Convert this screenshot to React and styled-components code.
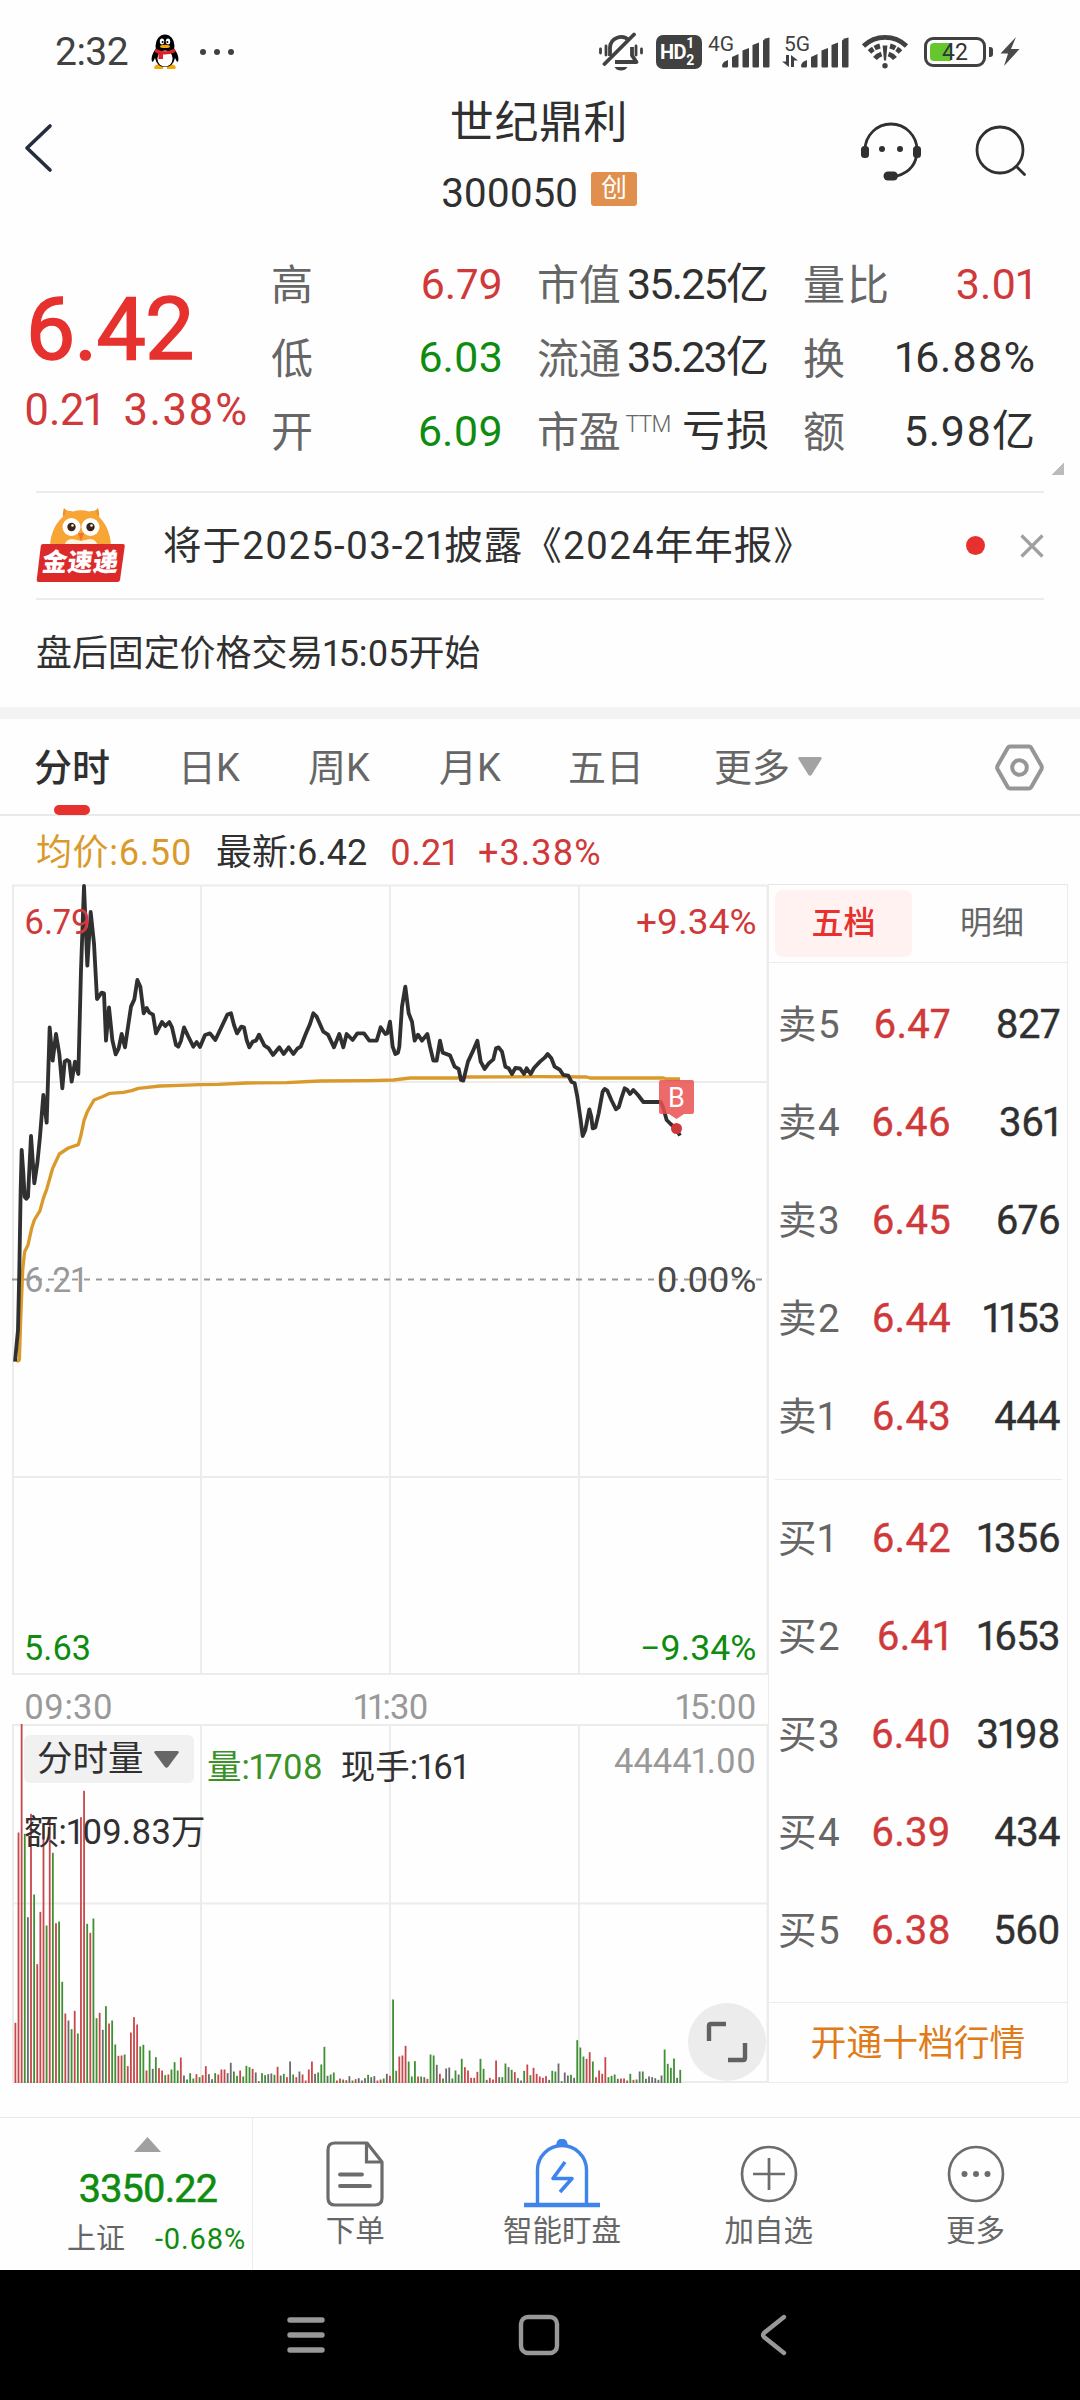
import React from 'react';
import styled, { createGlobalStyle } from 'styled-components';

const COLORS = {
	ink: '#303030',
	gray: '#666',
	light: '#999',
	line: '#ececec',
	red: '#d0393a',
	brightRed: '#e6312f',
	green: '#0f8c10',
	gold: '#d99a2b',
	orange: '#e07b1a',
	blue: '#3f83ec',
};

const STATS = [
	[
		{ label: '高', value: '6.79', color: COLORS.red },
		{ label: '低', value: '6.03', color: COLORS.green },
		{ label: '开', value: '6.09', color: COLORS.green },
	],
	[
		{ label: '市值', value: '35.25亿', spacing: -1.8 },
		{ label: '流通', value: '35.23亿', spacing: -1.8 },
		{ label: '市盈', sup: 'TTM', value: '亏损', spacing: 1 },
	],
	[
		{ label: '量比', value: '3.01', color: COLORS.red, labelSpacing: 2 },
		{ label: '换', value: '16.88%', spacing: 0.7 },
		{ label: '额', value: '5.98亿', spacing: 0.8 },
	],
];

const SELLS = [
	['卖5', '6.47', '827'],
	['卖4', '6.46', '361'],
	['卖3', '6.45', '676'],
	['卖2', '6.44', '1153'],
	['卖1', '6.43', '444'],
];

const BUYS = [
	['买1', '6.42', '1356'],
	['买2', '6.41', '1653'],
	['买3', '6.40', '3198'],
	['买4', '6.39', '434'],
	['买5', '6.38', '560'],
];

// chart data is kept at 3x, the svg scales it down
const PRICE_LINE =
	'45,1475 54,1380 58,1200 62,960 65,840 70,910 74,980 79,986 84,980 93,798 98,870 103,940 112,880 120,800 130,675 140,758 149,472 158,572 168,492 178,552 187,655 194,575 201,570 208,575 215,635 225,575 235,612 243,300 252,48 262,287 272,126 282,220 291,387 305,368 312,370 318,512 327,412 337,510 347,553 356,535 365,492 375,532 384,470 393,410 403,388 412,330 421,350 431,430 440,414 448,428 459,434 468,490 486,456 496,468 508,456 516,472 528,525 535,530 543,512 552,472 565,500 580,530 590,516 600,531 615,495 630,490 646,510 665,470 682,434 693,430 702,465 711,490 724,470 732,472 740,510 748,532 758,515 768,512 777,494 793,526 806,535 819,555 838,532 851,552 866,532 880,552 892,536 902,530 918,490 930,462 940,430 950,440 970,485 984,494 1002,532 1018,492 1030,532 1040,492 1058,510 1072,490 1092,490 1108,512 1130,512 1142,472 1156,492 1162,490 1170,455 1178,530 1186,552 1194,548 1198,530 1206,410 1216,350 1226,430 1236,455 1244,512 1254,494 1266,512 1282,492 1290,530 1300,572 1310,572 1320,512 1328,548 1350,556 1364,590 1376,597 1383,630 1390,632 1404,575 1418,545 1432,512 1442,575 1454,597 1466,580 1480,568 1488,535 1496,532 1506,545 1516,590 1526,595 1536,612 1546,594 1560,595 1572,612 1580,595 1592,612 1602,594 1620,575 1634,563 1643,552 1654,565 1664,590 1680,600 1690,615 1705,617 1714,635 1724,640 1732,680 1742,750 1748,798 1756,780 1768,718 1774,740 1778,775 1786,772 1796,730 1808,665 1814,657 1822,662 1834,690 1848,718 1856,712 1864,685 1874,655 1882,660 1890,672 1900,660 1914,675 1930,696 1982,696 1990,715 2000,750 2012,762 2028,776 2040,797';

const AVERAGE_LINE =
	'50,1475 58,1470 62,1350 68,1200 74,1145 84,1125 95,1075 103,1050 120,1022 130,985 140,958 158,895 178,852 205,834 235,824 243,795 252,752 262,725 282,690 305,681 330,670 370,667 395,662 415,655 480,648 540,646 600,644 655,643 740,639 860,638 960,633 1110,632 1180,630 1230,624 1370,624 1400,621 1620,620 1760,621 1770,624 1990,624 2002,627 2040,627';

// r = up, g = down, k = flat; the number is the top of the bar
const VOLUME = `
	r1267 r696 r369 g700 k950 r640 g882 r1091 r934 r672 g975 r655 g757 r968 g963 g1144 r1239 k1260 g1286 r1231
	g1299 r650 r571 g970 r997 g954 g1253 r1237 k1288 g1217 r1269 g1260 g1332 r1366 r1365 g1362 r1397 r1296 r1250 r1272
	g1338 g1333 r1410 g1350 k1405 g1370 r1403 r1410 g1424 r1422 g1407 g1385 g1410 r1371 k1425 g1437 g1418 g1434 r1421 g1430
	r1424 r1397 k1421 k1436 g1418 r1422 r1407 r1407 k1418 k1387 g1413 g1426 r1410 g1428 g1396 g1400 r1405 k1416 r1442 g1418
	g1424 k1421 k1419 g1423 r1399 k1425 g1420 r1430 k1383 g1422 r1430 k1413 r1422 r1440 r1407 r1383 k1420 g1416 g1392 g1339
	k1426 g1422 g1416 r1440 r1434 g1437 r1439 k1427 g1440 r1436 k1433 k1440 k1433 g1423 k1430 k1427 r1440 r1437 g1434 k1420
	r1426 g1197 g1411 r1368 r1365 r1336 g1383 g1428 g1382 r1428 g1428 k1430 r1435 g1362 g1365 k1393 r1420 g1434 k1404 k1401
	g1434 g1410 k1422 g1375 r1400 r1410 r1432 r1432 r1414 g1375 g1405 k1438 r1432 r1437 r1380 k1430 g1430 g1389 k1400 g1408
	r1415 k1433 k1440 g1411 r1392 g1424 r1402 r1420 r1428 r1432 r1427 k1438 g1411 g1413 k1389 g1442 k1416 k1425 g1423 k1432
	g1319 g1341 g1368 r1375 r1355 g1383 r1430 r1410 r1420 r1370 g1430 g1426 g1422 k1435 r1434 r1434 k1440 g1420 r1438 g1437
	k1413 g1413 k1435 k1428 k1430 k1433 k1438 k1425 g1347 g1390 g1402 g1374 k1432 g1408
`
	.trim()
	.split(/\s+/);

const VOLUME_COLORS = { r: '#c9474a', g: '#3f8f33', k: '#6a6a6a' };

const PenguinIcon = () => (
	<svg width='32' height='36' viewBox='0 0 32 36'>
		<path d='M7 31 L14 29 L14 35 H6 Q4 33 7 31 Z M25 31 L18 29 L18 35 H26 Q28 33 25 31 Z' fill='#f5a800' />
		<ellipse cx='16' cy='12' rx='9.5' ry='11.5' fill='#000' />
		<path d='M6.5 15 Q1 23 3 28 Q5 27 6 24 Q8 33 16 33 Q24 33 26 24 Q27 27 29 28 Q31 23 25.5 15 Z' fill='#000' />
		<ellipse cx='16' cy='24.5' rx='7.6' ry='8' fill='#fff' />
		<ellipse cx='13' cy='7.5' rx='2.2' ry='3' fill='#fff' />
		<ellipse cx='19' cy='7.5' rx='2.2' ry='3' fill='#fff' />
		<circle cx='13.6' cy='8' r='1' fill='#000' />
		<circle cx='18.4' cy='8' r='1' fill='#000' />
		<ellipse cx='16' cy='12.4' rx='5' ry='1.7' fill='#f5a800' />
		<path d='M6.5 14.5 Q16 20 25.5 14.5 L26.5 18 Q20 21 14 20.5 V25 H9.5 V19.7 L5.8 18 Z' fill='#e01f26' />
	</svg>
);

const MutedBellIcon = () => (
	<svg width='46' height='40' viewBox='0 0 46 40' fill='none' stroke='#414141'>
		<path d='M8 14v9M2.500 17v4M38 14v9M43.500 17v4' strokeWidth='2.800' strokeLinecap='round' />
		<path d='M12 24V15.500a11 11 0 0 1 19-7' strokeWidth='3.800' />
		<path d='M34 15v8.500l4.500 6.500H17' strokeWidth='3.800' strokeLinejoin='round' />
		<path d='M6.500 32L36 2.500' strokeWidth='3.800' strokeLinecap='round' />
		<path d='M16.500 35h13q-2 3.600-6.500 3.600t-6.500-3.600z' fill='#414141' stroke='none' />
	</svg>
);

const SignalBars = () => (
	<svg width='49' height='31' viewBox='0 0 49 31' fill='#414141'>
		<path d='M1 29q0-4 6-6v6q0 1.500-1.500 1.500H2.500Q1 30.500 1 29z' />
		<path d='M11 20l6.500-3v12.500a1 1 0 0 1-1 1h-4.500a1 1 0 0 1-1-1z' />
		<path d='M21.500 13.500l6.500-2.500v18.500a1 1 0 0 1-1 1h-4.500a1 1 0 0 1-1-1z' />
		<path d='M31.500 8l6.500-2.500v24a1 1 0 0 1-1 1H32.500a1 1 0 0 1-1-1z' />
		<path d='M42 3.500q2-2.500 6.500-3v29a1 1 0 0 1-1 1h-4.500a1 1 0 0 1-1-1z' />
	</svg>
);

const DataArrows = () => (
	<svg width='16' height='12' viewBox='0 0 16 12' fill='#414141'>
		<path d='M4 0h3v12L0 6.500h4zM9 12V0l7 5.500h-4V12z' />
	</svg>
);

const WifiIcon = () => (
	<svg width='48' height='34' viewBox='0 0 48 34' fill='none' stroke='#414141'>
		<path d='M2.500 11a31 31 0 0 1 43 0' strokeWidth='4.6' />
		<path d='M8.500 17a23 23 0 0 1 10.500-6M39.500 17a23 23 0 0 0-10.500-6' strokeWidth='5' strokeDasharray='5 1.500 8' />
		<path d='M14 23.500a14 14 0 0 1 6.500-4.500M34 23.500a14 14 0 0 0-6.500-4.500' strokeWidth='5' />
		<path d='M21.600 10.500h4.800l-1.400 15h-2z' fill='#414141' stroke='none' />
		<circle cx='24' cy='30.800' r='2.700' fill='#414141' stroke='none' />
	</svg>
);

const BoltIcon = () => (
	<svg width='20' height='29' viewBox='0 0 20 29'>
		<path d='M16 0L.5 16.500h7.500L4 29 19.500 12H11z' fill='#4a4a4a' />
	</svg>
);

const BackIcon = () => (
	<svg width='32' height='50' viewBox='0 0 32 50'>
		<path d='M28 3L5 25l23 22' fill='none' stroke='#232d3d' strokeWidth='3.6' strokeLinecap='round' strokeLinejoin='round' />
	</svg>
);

const HeadsetIcon = () => (
	<svg width='62' height='60' viewBox='0 0 62 60' fill='#303030'>
		<path d='M5 28a26 26 0 0 1 52 0q0 20-20 26' fill='none' stroke='#303030' strokeWidth='2.800' />
		<rect x='1' y='24' width='8' height='12' rx='3.500' />
		<rect x='53' y='24' width='8' height='12' rx='3.500' />
		<circle cx='22' cy='27' r='3' />
		<circle cx='40' cy='27' r='3' />
		<rect x='23.500' y='49.500' width='14.500' height='9' rx='4.500' />
	</svg>
);

const SearchIcon = () => (
	<svg width='54' height='54' viewBox='0 0 54 54' fill='none' stroke='#303030' strokeWidth='2.800'>
		<circle cx='27' cy='25' r='23' />
		<path d='M43.500 41.500l8 8' strokeLinecap='round' />
	</svg>
);

const OwlLogo = () => (
	<svg width='90' height='76' viewBox='0 0 90 76'>
		<path d='M28 0q-2 6-.5 10L37 3Q31 4 28 0zM62 0q2 6 .5 10L53 3Q59 4 62 0z' fill='#e8952f' />
		<path d='M14 38Q15 18 29 7l1-5q4 3 7 1.500 8-2.500 16 0Q57 5 60 2l1 5q13 11 14 31z' fill='#f7a535' />
		<path d='M28 38q2-7 8-7 6 1 9 2 3-1 9-2 6 0 8 7z' fill='#fff3e0' />
		<path d='M42 25h6l-3 8z' fill='#f0762a' />
		<circle cx='35.500' cy='19' r='9' fill='#fff' />
		<circle cx='54.500' cy='19' r='9' fill='#fff' />
		<circle cx='35.500' cy='19' r='4.200' fill='#3a2415' />
		<circle cx='54.500' cy='19' r='4.200' fill='#3a2415' />
		<circle cx='36.500' cy='17.500' r='1.300' fill='#fff' />
		<circle cx='55.500' cy='17.500' r='1.300' fill='#fff' />
		<path d='M7 36h80q2 0 1.800 2l-4.800 34q-.4 2-2.500 2H2.500q-2 0-1.800-2L4.800 38q.2-2 2.200-2z' fill='#dc2a2a' />
		<text
			x='7'
			y='63'
			textLength='76'
			fontSize='25'
			fontWeight='900'
			fontFamily='"Noto Sans CJK SC", sans-serif'
			fill='#fff'
			transform='skewX(-7) translate(6 0)'
		>
			金速递
		</text>
	</svg>
);

const CloseIcon = () => (
	<svg width='24' height='24' viewBox='0 0 24 24'>
		<path d='M1.500 1.500l21 21M22.500 1.500l-21 21' stroke='#a0a0a0' strokeWidth='3.200' />
	</svg>
);

const HexIcon = () => (
	<svg width='49' height='47' viewBox='0 0 49 47' fill='none' stroke='#969696' strokeWidth='4'>
		<path
			d='M15 2.500h19q1.500 0 2.300 1.400l10 17.600q1 2 0 4l-10 17.600q-.8 1.400-2.300 1.400H15q-1.500 0-2.300-1.400l-10-17.600q-1-2 0-4l10-17.600Q13.500 2.500 15 2.500z'
			strokeLinejoin='round'
		/>
		<circle cx='24.500' cy='23.500' r='7.300' />
	</svg>
);

const Triangle = ({ width, height, color, up }) => (
	<svg width={width} height={height} viewBox='0 0 24 18' preserveAspectRatio='none'>
		<path d={up ? 'M12 0L24 18H0z' : 'M1.500 0h21q2 .5 1 2L13.500 17q-1.500 1.500-3 0L.5 2q-1-1.500 1-2z'} fill={color} />
	</svg>
);

const ExpandIcon = () => (
	<svg width='42' height='42' viewBox='0 0 42 42' fill='none' stroke='#616161' strokeWidth='4.400'>
		<path d='M3 20V5q0-2 2-2h15M39 22v15q0 2-2 2H22' />
	</svg>
);

const OrderIcon = () => (
	<svg width='58' height='66' viewBox='0 0 58 66' fill='none' stroke='#6c6c6c' strokeWidth='3.200'>
		<path d='M9 2h32l15 19v36q0 7-7 7H9q-7 0-7-7V9q0-7 7-7z' strokeLinejoin='round' />
		<path d='M40.500 3v18H56' />
		<path d='M14 33.500h22M14 45h30' strokeWidth='3.800' strokeLinecap='round' />
	</svg>
);

const WatchIcon = () => (
	<svg width='76' height='70' viewBox='0 0 76 70' fill='none' stroke={COLORS.blue} strokeWidth='3.400'>
		<path d='M13.500 65V31a24.500 24.500 0 0 1 49 0v34' />
		<path d='M34 6q0-4 4-5 4 1 4 5z' fill={COLORS.blue} />
		<path d='M0 66h76' strokeWidth='4.400' />
		<path d='M41 23L29 39.500h19L36 53' strokeWidth='3.600' strokeLinejoin='round' />
	</svg>
);

const AddIcon = () => (
	<svg width='58' height='58' viewBox='0 0 58 58' fill='none' stroke='#6c6c6c' strokeWidth='2.700'>
		<circle cx='29' cy='29' r='27' />
		<path d='M13 29h32M29 13v32' />
	</svg>
);

const MoreIcon = () => (
	<svg width='58' height='58' viewBox='0 0 58 58' fill='#6c6c6c'>
		<circle cx='29' cy='29' r='27' fill='none' stroke='#6c6c6c' strokeWidth='2.700' />
		<circle cx='17.500' cy='29' r='3' />
		<circle cx='29' cy='29' r='3' />
		<circle cx='40.500' cy='29' r='3' />
	</svg>
);

const ChartLabel = ({ x, y, width, color, children }) => (
	<text x={x} y={y} textLength={width} lengthAdjust='spacingAndGlyphs' fontSize='34.5' fill={color}>
		{children}
	</text>
);

const PriceChart = () => (
	<ChartSvg width='768' height='791' viewBox='0 0 768 791'>
		<g stroke={COLORS.line} strokeWidth='2'>
			<path d='M12 1.500H768M12 198H768M12 593H768M12 790H768' />
			<path d='M13 1V791M201 1V791M390 1V791M579 1V791M767.500 1V791' />
		</g>
		<path d='M12 395.500H764' stroke='#9a9a9a' strokeWidth='1.800' strokeDasharray='6 6' />
		<g transform='translate(0 -14) scale(0.33333)' fill='none' strokeLinejoin='round'>
			<polyline points={AVERAGE_LINE} stroke={COLORS.gold} strokeWidth='10' />
			<polyline points={PRICE_LINE} stroke='#303030' strokeWidth='11.500' />
		</g>
		<ChartLabel x='24' y='49.500' width='67' color={COLORS.red}>6.79</ChartLabel>
		<ChartLabel x='24' y='407.500' width='62' color={COLORS.light}>6.21</ChartLabel>
		<ChartLabel x='24' y='776' width='67' color={COLORS.green}>5.63</ChartLabel>
		<ChartLabel x='636' y='49.500' width='120.500' color={COLORS.red}>+9.34%</ChartLabel>
		<ChartLabel x='656.500' y='407.500' width='100' color='#4a4a4a'>0.00%</ChartLabel>
		<ChartLabel x='640' y='776' width='116.500' color={COLORS.green}>−9.34%</ChartLabel>
		<circle cx='676.500' cy='244.500' r='5.500' fill={COLORS.red} />
		<path d='M661 196h31q2 0 2 2v30q0 2-2 2h-8l-7.500 5-7.500-5h-8q-2 0-2-2v-30q0-2 2-2z' fill='#e95050' fillOpacity='.85' />
		<text x='676.500' y='223' fontSize='27' textAnchor='middle' fill='#fff'>
			B
		</text>
	</ChartSvg>
);

const VolumeChart = () => (
	<ChartSvg width='768' height='359' viewBox='0 0 768 359'>
		<g stroke={COLORS.line} strokeWidth='2'>
			<path d='M12 1H768M12 179.500H768M12 358H768' />
			<path d='M13 0V359M201 0V359M390 0V359M579 0V359M767.500 0V359' />
		</g>
		<g transform='translate(0 -123.500) scale(0.33333)'>
			{VOLUME.map((bar, i) => (
				<rect
					key={i}
					x={43.500 + i * 9.364}
					y={bar.slice(1)}
					width='5.400'
					height={1448 - bar.slice(1)}
					fill={VOLUME_COLORS[bar[0]]}
				/>
			))}
		</g>
		<ChartLabel x='614' y='49' width='142' color={COLORS.light}>44441.00</ChartLabel>
	</ChartSvg>
);

const Stat = ({ label, sup, value, color, spacing, labelSpacing }) => (
	<StatRow>
		<StatLabel $spacing={labelSpacing}>
			{label}
			{sup && <Sup>{sup}</Sup>}
		</StatLabel>
		<StatValue $color={color} $spacing={spacing}>
			{value}
		</StatValue>
	</StatRow>
);

const OrderRow = ({ row: [label, price, amount] }) => (
	<OrderLine>
		<OrderLabel>{label}</OrderLabel>
		<OrderPrice>{price}</OrderPrice>
		<OrderAmount>{amount}</OrderAmount>
	</OrderLine>
);

const App = () => {
	return (
		<Page>
			<GlobalStyle />
			<StatusBar>
				<Clock>2:32</Clock>
				<PenguinIcon />
				<StatusDots>
					<i />
					<i />
					<i />
				</StatusDots>
				<StatusFiller />
				<MutedBellIcon />
				<HdBadge>
					HD
					<HdNumbers>
						<span>1</span>
						<span>2</span>
					</HdNumbers>
				</HdBadge>
				<Signal>
					<Network>
						<span>4G</span>
					</Network>
					<SignalBars />
				</Signal>
				<Signal $wide>
					<Network>
						<span>5G</span>
						<DataArrows />
					</Network>
					<SignalBars />
				</Signal>
				<WifiIcon />
				<Battery>
					<BatteryLevel />
					<BatteryText>42</BatteryText>
				</Battery>
				<BatteryNub />
				<BoltIcon />
			</StatusBar>

			<Header>
				<BackIcon />
				<Heading>
					<Title>世纪鼎利</Title>
					<Code>
						300050
						<Board>创</Board>
					</Code>
				</Heading>
				<HeaderActions>
					<HeadsetIcon />
					<SearchIcon />
				</HeaderActions>
			</Header>

			<Quote>
				<PriceBlock>
					<Price>6.42</Price>
					<Change>
						<span>0.21</span>
						<ChangePercent>3.38%</ChangePercent>
					</Change>
				</PriceBlock>
				{STATS.map((column, i) => (
					<div key={i}>
						{column.map((stat) => (
							<Stat key={stat.label} {...stat} />
						))}
					</div>
				))}
				<Corner />
			</Quote>

			<Notice>
				<OwlLogo />
				<NoticeText>将于2025-03-21披露《2024年年报》</NoticeText>
				<RedDot />
				<CloseIcon />
			</Notice>
			<AfterHours>盘后固定价格交易15:05开始</AfterHours>

			<Tabs>
				<Tab $active>分时</Tab>
				<Tab>日K</Tab>
				<Tab>周K</Tab>
				<Tab>月K</Tab>
				<Tab>五日</Tab>
				<Tab>
					更多
					<Triangle width='24' height='19' color='#a3a3a3' />
				</Tab>
				<HexIcon />
			</Tabs>

			<Legend>
				<LegendItem $color={COLORS.gold} $spacing={0.6}>
					均价:6.50
				</LegendItem>
				<LegendItem $spacing={0}>最新:6.42</LegendItem>
				<LegendItem $color={COLORS.red}>0.21</LegendItem>
				<LegendItem $color={COLORS.red} $spacing={1}>
					+3.38%
				</LegendItem>
			</Legend>

			<Main>
				<Charts>
					<PriceChart />
					<TimeAxis>
						<span>09:30</span>
						<span>11:30</span>
						<span>15:00</span>
					</TimeAxis>
					<VolumeArea>
						<VolumeChart />
						<VolumeInfo>
							<VolumeSelect>
								分时量
								<Triangle width='25' height='17' color='#666' />
							</VolumeSelect>
							<VolumeText $color='#3a9127'>量:1708</VolumeText>
							<VolumeText>现手:161</VolumeText>
						</VolumeInfo>
						<Turnover>额:109.83万</Turnover>
						<ExpandButton>
							<ExpandIcon />
						</ExpandButton>
					</VolumeArea>
				</Charts>
				<OrderBook>
					<BookTabs>
						<BookTab $active>五档</BookTab>
						<BookTab>明细</BookTab>
					</BookTabs>
					<Side>
						{SELLS.map((row) => (
							<OrderRow key={row[0]} row={row} />
						))}
					</Side>
					<SideDivider />
					<Side $buy>
						{BUYS.map((row) => (
							<OrderRow key={row[0]} row={row} />
						))}
					</Side>
					<Upgrade>开通十档行情</Upgrade>
				</OrderBook>
			</Main>

			<BottomBar>
				<IndexBlock>
					<Triangle width='27' height='15' color='#a0a0a0' up />
					<IndexValue>3350.22</IndexValue>
					<IndexMeta>
						上证
						<IndexChange>-0.68%</IndexChange>
					</IndexMeta>
				</IndexBlock>
				<Action>
					<ActionIcon>
						<OrderIcon />
					</ActionIcon>
					下单
				</Action>
				<Action>
					<ActionIcon>
						<WatchIcon />
					</ActionIcon>
					智能盯盘
				</Action>
				<Action>
					<ActionIcon>
						<AddIcon />
					</ActionIcon>
					加自选
				</Action>
				<Action>
					<ActionIcon>
						<MoreIcon />
					</ActionIcon>
					更多
				</Action>
			</BottomBar>

			<SystemBar>
				<svg width='40' height='38' viewBox='0 0 40 38' stroke='#989898' strokeWidth='5.400' strokeLinecap='round'>
					<path d='M4 4h32M4 19h32M4 34h32' />
				</svg>
				<svg width='42' height='42' viewBox='0 0 42 42' fill='none' stroke='#989898' strokeWidth='4.400'>
					<rect x='3' y='3' width='36' height='36' rx='7' />
				</svg>
				<svg width='30' height='42' viewBox='0 0 30 42' fill='none' stroke='#989898' strokeWidth='4.400'>
					<path d='M26 3L6 19q-2 2 0 4l20 16' strokeLinecap='round' />
				</svg>
			</SystemBar>
		</Page>
	);
};

const GlobalStyle = createGlobalStyle`
	* {
		box-sizing: border-box;
	}

	body {
		margin: 0;
		background: #fefefe;
	}

	svg {
		display: block;
		flex: none;
	}
`;

const Page = styled.div`
	width: 1080px;
	height: 2400px;
	overflow: hidden;
	display: flex;
	flex-direction: column;
	background: #fefefe;
	color: ${COLORS.ink};
	font-family: Roboto, 'Noto Sans CJK SC', sans-serif;
	font-variant-numeric: proportional-nums;
	white-space: nowrap;
`;

const StatusBar = styled.div`
	height: 88px;
	padding: 15px 60px 0 55px;
	display: flex;
	align-items: center;
`;

const Clock = styled.div`
	width: 94px;
	font-size: 39px;
	line-height: 44px;
	letter-spacing: -0.5px;
	color: #414141;
`;

const StatusDots = styled.div`
	display: flex;
	gap: 8px;
	margin-left: 19px;

	i {
		width: 6px;
		height: 6px;
		border-radius: 50%;
		background: #414141;
	}
`;

const StatusFiller = styled.div`
	flex: 1;
`;

const HdBadge = styled.div`
	width: 46px;
	height: 34px;
	margin: 0 4px 0 12px;
	padding-left: 4px;
	border-radius: 7px;
	display: flex;
	align-items: center;
	background: #414141;
	color: #fff;
	font: 700 20px/34px Roboto, sans-serif;
	letter-spacing: -0.5px;
`;

const HdNumbers = styled.div`
	display: flex;
	flex-direction: column;
	font-size: 14px;
	line-height: 17px;
`;

const Signal = styled.div`
	width: ${(p) => (p.$wide ? 67 : 64)}px;
	height: 34px;
	margin-right: 12px;
	display: flex;
	align-items: flex-end;
	justify-content: flex-end;
	position: relative;

	> svg {
		margin-bottom: 1px;
	}
`;

const Network = styled.div`
	position: absolute;
	left: 0;
	top: 0;
	height: 32px;
	display: flex;
	flex-direction: column;
	justify-content: space-between;
	font-size: 21px;
	line-height: 18px;
	color: #414141;

	span {
		padding-left: 2px;
	}
`;

const Battery = styled.div`
	width: 62px;
	height: 30px;
	margin-left: 15px;
	padding: 3px;
	border: 3px solid #414141;
	border-radius: 9px;
	position: relative;
	display: flex;
`;

const BatteryLevel = styled.div`
	width: 21px;
	border-radius: 4px 0 0 4px;
	background: #65c72d;
`;

const BatteryText = styled.div`
	position: absolute;
	inset: 0;
	text-align: center;
	font-size: 23px;
	line-height: 25px;
	color: #333;
`;

const BatteryNub = styled.div`
	width: 4px;
	height: 10px;
	margin: 0 7px 0 3px;
	border-radius: 0 3px 3px 0;
	background: #414141;
`;

const Header = styled.header`
	height: 142px;
	padding: 7px 53px 0 22px;
	display: grid;
	grid-template-columns: 340px 1fr 340px;
	align-items: start;

	> svg {
		margin-top: 28px;
	}
`;

const Heading = styled.div`
	display: flex;
	flex-direction: column;
	align-items: center;
	gap: 14px;
	margin-left: 29px;
`;

const Title = styled.h1`
	margin: 0;
	font-size: 44px;
	line-height: 56px;
	font-weight: 400;
	letter-spacing: 0.6px;
`;

const Code = styled.div`
	display: flex;
	align-items: center;
	font-size: 40.5px;
	line-height: 56px;
	letter-spacing: -0.5px;
`;

const Board = styled.span`
	width: 46px;
	height: 34px;
	margin: -9px 0 0 13px;
	border-radius: 3px;
	background: #e18f4c;
	color: #fff;
	text-align: center;
	font-size: 26px;
	line-height: 32px;
`;

const HeaderActions = styled.div`
	display: flex;
	justify-content: flex-end;
	align-items: center;
	gap: 51px;
	margin-top: 27px;
`;

const Quote = styled.section`
	position: relative;
	height: 261px;
	padding: 17px 45px 0 25px;
	display: grid;
	grid-template-columns: 246px 232px 232px 232px;
	justify-content: start;

	> div:nth-child(n + 3) {
		margin-left: 34px;
		margin-right: -34px;
	}

	> div:nth-child(4) {
		margin-left: 68px;
		margin-right: -68px;
	}
`;

const PriceBlock = styled.div`
	color: ${COLORS.red};
	padding-top: 32px;
`;

const Price = styled.div`
	font-size: 88px;
	line-height: 100px;
	letter-spacing: -1px;
	color: ${COLORS.brightRed};
	-webkit-text-stroke: 1.5px ${COLORS.brightRed};
`;

const Change = styled.div`
	margin: 6px 0 0 -1px;
	display: flex;
	gap: 21px;
	font-size: 43.5px;
	line-height: 52px;
	letter-spacing: -0.4px;
`;

const ChangePercent = styled.span`
	letter-spacing: 1.5px;
`;

const StatRow = styled.div`
	height: 73.5px;
	display: flex;
	align-items: center;
	justify-content: space-between;
`;

const StatLabel = styled.div`
	margin-top: -4px;
	font-size: 42px;
	letter-spacing: ${(p) => p.$spacing ?? -0.3}px;
	color: ${COLORS.gray};
	display: flex;
`;

const StatValue = styled.div`
	font-size: 43px;
	line-height: 60px;
	letter-spacing: ${(p) => p.$spacing ?? 0}px;
	margin-right: ${(p) => -(p.$spacing ?? 0)}px;
	color: ${(p) => p.$color ?? COLORS.ink};
`;

const Sup = styled.sup`
	font-size: 23px;
	line-height: 54px;
	font-weight: 300;
	letter-spacing: -0.8px;
	vertical-align: top;
	margin: 0 -12px 0 5px;
`;

const Corner = styled.i`
	position: absolute;
	right: 16px;
	bottom: 16px;
	width: 13px;
	height: 12px;
	background: linear-gradient(to bottom right, transparent 50%, #bbb 50%);
`;

const Notice = styled.div`
	height: 109px;
	margin: 0 36px;
	border: solid ${COLORS.line};
	border-width: 2px 0;
	display: flex;
	align-items: center;
`;

const NoticeText = styled.div`
	flex: 1;
	margin-left: 37px;
	font-size: 38.5px;
	line-height: 56px;
	letter-spacing: 1.1px;
`;

const RedDot = styled.i`
	width: 19px;
	height: 19px;
	margin-right: 35px;
	border-radius: 50%;
	background: ${COLORS.brightRed};
`;

const AfterHours = styled.div`
	height: 107px;
	padding-left: 36px;
	font-size: 36px;
	line-height: 109px;
	letter-spacing: -0.1px;
`;

const Tabs = styled.nav`
	height: 109px;
	border-top: 12px solid #f3f3f3;
	border-bottom: 2px solid #e9e9e9;
	padding: 0 36px 0 34px;
	display: grid;
	grid-template-columns: 144px 130px 131px 129px 146px 1fr auto;
	align-items: center;
`;

const Tab = styled.div`
	height: 96px;
	width: max-content;
	padding-bottom: 5px;
	display: flex;
	align-items: center;
	gap: 8px;
	position: relative;
	font-size: 38px;
	color: ${(p) => (p.$active ? COLORS.ink : COLORS.gray)};
	font-weight: ${(p) => (p.$active ? 500 : 400)};

	svg {
		margin-top: 4px;
	}

	&::after {
		content: '';
		display: ${(p) => (p.$active ? 'block' : 'none')};
		position: absolute;
		left: 20px;
		bottom: 0;
		width: 36px;
		height: 10px;
		border-radius: 5px;
		background: ${COLORS.brightRed};
	}
`;

const Legend = styled.div`
	height: 68px;
	padding-left: 36px;
	display: grid;
	grid-template-columns: 180px 174px 88px auto;
	line-height: 74px;
`;

const LegendItem = styled.div`
	font-size: 36px;
	letter-spacing: ${(p) => p.$spacing ?? 0.3}px;
	color: ${(p) => p.$color ?? COLORS.ink};
`;

const Main = styled.main`
	height: 1199px;
	display: flex;
`;

const Charts = styled.div`
	width: 768px;
`;

const ChartSvg = styled.svg`
	font-family: Roboto, sans-serif;
`;

const TimeAxis = styled.div`
	height: 49px;
	padding: 0 12px 0 24px;
	display: grid;
	grid-template-columns: 1fr auto 1fr;
	font-size: 34.5px;
	line-height: 64px;
	color: ${COLORS.light};

	span:first-child {
		letter-spacing: 0.3px;
	}

	span:nth-child(2) {
		letter-spacing: -0.8px;
		margin-left: 2px;
	}

	span:last-child {
		text-align: right;
		letter-spacing: -0.5px;
	}
`;

const VolumeArea = styled.div`
	position: relative;
`;

const VolumeInfo = styled.div`
	position: absolute;
	left: 24px;
	top: 11px;
	display: flex;
	align-items: flex-start;
`;

const VolumeSelect = styled.div`
	width: 170px;
	height: 48px;
	margin-right: 13px;
	padding-left: 13px;
	border-radius: 6px;
	background: #f1f1f1;
	display: flex;
	align-items: center;
	gap: 10px;
	font-size: 35.5px;
	line-height: 48px;
`;

const VolumeText = styled.div`
	margin-right: 18px;
	font-size: 34.5px;
	line-height: 64px;
	color: ${(p) => p.$color ?? COLORS.ink};
`;

const Turnover = styled.div`
	position: absolute;
	left: 24px;
	top: 82px;
	font-size: 34.5px;
	line-height: 52px;
	letter-spacing: 0.1px;
`;

const ExpandButton = styled.div`
	position: absolute;
	right: 2px;
	bottom: 2px;
	width: 78px;
	height: 78px;
	border-radius: 50%;
	background: #ececec;
	display: grid;
	place-items: center;
`;

const OrderBook = styled.section`
	width: 300px;
	border: 1px solid ${COLORS.line};
	border-top-color: #e6e6e6;
`;

const BookTabs = styled.div`
	height: 78px;
	padding: 5px 6px;
	border-bottom: 1px solid ${COLORS.line};
	display: grid;
	grid-template-columns: 137px 1fr;
	gap: 11px;
`;

const BookTab = styled.div`
	border-radius: 8px;
	text-align: center;
	font-size: 32px;
	line-height: 66px;
	color: ${(p) => (p.$active ? COLORS.brightRed : COLORS.gray)};
	background: ${(p) => (p.$active ? '#fff2f1' : 'none')};
	font-weight: ${(p) => (p.$active ? 500 : 400)};
`;

const Side = styled.div`
	padding: ${(p) => (p.$buy ? 9 : 12)}px 7px 0 9px;
	height: 516px;
`;

const OrderLine = styled.div`
	height: 98px;
	display: grid;
	grid-template-columns: 82px 91px 1fr;
	align-items: center;
	font-size: 40px;
	text-align: right;
`;

const OrderLabel = styled.div`
	margin-top: -6px;
	font-size: 38.5px;
	letter-spacing: 1.5px;
	text-align: left;
	color: ${COLORS.gray};
`;

const OrderPrice = styled.div`
	letter-spacing: 0.3px;
	color: ${COLORS.red};
	-webkit-text-stroke: 0.4px ${COLORS.red};
`;

const OrderAmount = styled.div`
	letter-spacing: -0.6px;
	-webkit-text-stroke: 0.4px ${COLORS.ink};
`;

const SideDivider = styled.div`
	height: 1px;
	margin: 0 5px 0 6px;
	background: ${COLORS.line};
`;

const Upgrade = styled.div`
	height: 81px;
	margin-top: 6px;
	border-top: 1px solid ${COLORS.line};
	text-align: center;
	font-size: 35.8px;
	line-height: 82px;
	color: ${COLORS.orange};
`;

const BottomBar = styled.footer`
	margin-top: 34px;
	height: 153px;
	border-top: 1px solid #e9e9e9;
	display: flex;
`;

const IndexBlock = styled.div`
	width: 253px;
	padding: 19px 0 0 44px;
	border-right: 1px solid ${COLORS.line};
	display: flex;
	flex-direction: column;
	align-items: center;
`;

const IndexValue = styled.div`
	margin-top: 12px;
	font-size: 39.5px;
	line-height: 50px;
	letter-spacing: -0.9px;
	color: ${COLORS.green};
	-webkit-text-stroke: 0.6px ${COLORS.green};
`;

const IndexMeta = styled.div`
	align-self: stretch;
	padding: 0 6px 0 23px;
	margin-top: 5px;
	display: flex;
	justify-content: space-between;
	font-size: 29px;
	line-height: 40px;
	color: ${COLORS.gray};
`;

const IndexChange = styled.span`
	letter-spacing: 0.6px;
	color: ${COLORS.green};
`;

const Action = styled.div`
	width: 207px;
	margin-left: -1px;
	margin-right: 1px;
	display: flex;
	flex-direction: column;
	align-items: center;
	font-size: 29.5px;
	line-height: 41px;
	color: ${COLORS.gray};
`;

const ActionIcon = styled.div`
	height: 93px;
	padding-top: 18px;
	display: flex;
	align-items: center;
`;

const SystemBar = styled.div`
	height: 130px;
	padding-left: 286px;
	background: #000;
	display: grid;
	grid-template-columns: 232px 240px auto;
	align-items: center;
	justify-content: start;
`;

export default App;
